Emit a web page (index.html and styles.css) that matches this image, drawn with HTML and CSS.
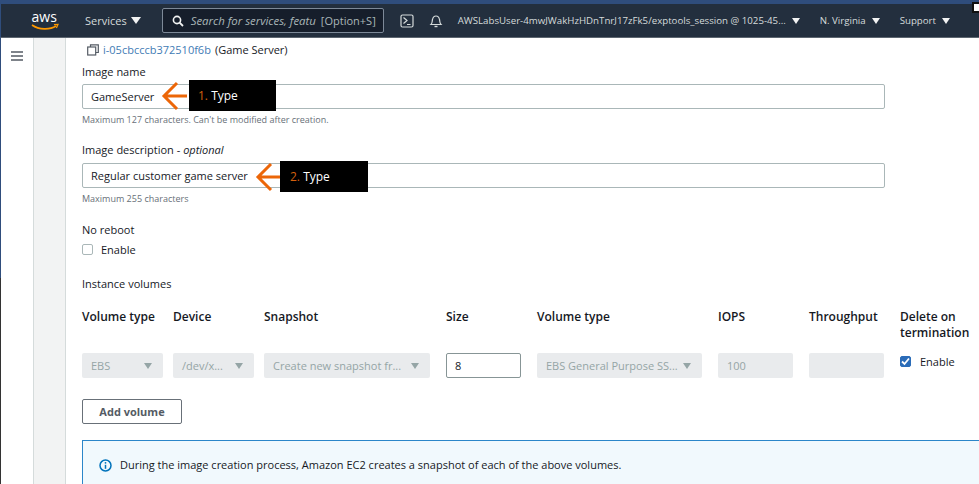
FILE: index.html
```html
<!DOCTYPE html>
<html>
	<head>
		<meta charset="UTF-8">
		<title>Create image</title>
		<link rel="stylesheet" href="styles.css">
	</head>
	<body>
		<div id="top-strip"></div>
		<div id="nav">
			<svg class="aws-logo" width="30" height="28" viewBox="0 -4 30 28">
				<text x="0.500" y="11" class="aws-text">aws</text>
				<path d="M1 14 C8 19 19 19 25 15" fill="none" stroke="#f90" stroke-width="1.600"/>
				<path d="M23 13.600 L27 13.400 L25.400 17" fill="none" stroke="#f90" stroke-width="1.200"/>
			</svg>
			<span class="nav-item services">Services <i class="caret"></i></span>
			<div class="search">
				<svg width="12" height="12" viewBox="0 0 12 12"><circle cx="5" cy="5" r="3.600" fill="none" stroke="#f2f3f3" stroke-width="1.600"/><path d="M7.600 7.600 L11 11" stroke="#f2f3f3" stroke-width="1.800"/></svg>
				<em>Search for services, featu</em>
				<span>[Option+S]</span>
			</div>
			<svg class="nav-icon shell" width="14" height="14" viewBox="0 0 14 14"><rect x="1" y="1" width="12" height="12" rx="1.500" fill="none" stroke="#d5dbdb" stroke-width="1.200"/><path d="M3.500 3.500 L7 6.500 L3.500 9.500 M7 10.500 H10.500" fill="none" stroke="#d5dbdb" stroke-width="1.200"/></svg>
			<svg class="nav-icon bell" width="14" height="14" viewBox="0 0 14 14"><path d="M2 10.500 C3.500 9 3 7.500 3.500 5.500 C4 3 5.500 2 7 2 C8.500 2 10 3 10.500 5.500 C11 7.500 10.500 9 12 10.500 Z" fill="none" stroke="#d5dbdb" stroke-width="1.200"/><path d="M5.500 12.500 H8.500" stroke="#d5dbdb" stroke-width="1.400"/></svg>
			<span class="nav-item account">AWSLabsUser-4mwJWakHzHDnTnrJ17zFk5/exptools_session @ 1025-45... <i class="caret"></i></span>
			<span class="nav-item region">N. Virginia <i class="caret"></i></span>
			<span class="nav-item support">Support <i class="caret"></i></span>
			<div class="corner-mark"></div>
		</div>
		<div id="page">
			<div id="sidebar">
				<svg width="12" height="10" viewBox="0 0 12 10"><path d="M0 1 H12 M0 5 H12 M0 9 H12" stroke="#545b64" stroke-width="1.300"/></svg>
			</div>
			<div id="gutter"></div>
			<div id="content">
				<div class="instance">
					<svg width="12" height="12" viewBox="0 0 12 12"><rect x="0.700" y="3" width="8" height="8" fill="none" stroke="#545b64" stroke-width="1.200"/><path d="M3.500 3 V0.800 H11.300 V8.500 H8.700" fill="none" stroke="#545b64" stroke-width="1.200"/></svg>
					<a href="#">i-05cbcccb372510f6b</a> (Game Server)
				</div>

				<label class="field-label">Image name</label>
				<div class="input-row">
					<div class="text-input">GameServer</div>
					<div class="callout callout-one">
						<svg width="28" height="30" viewBox="0 0 28 30"><path d="M26 15 H4 M16 2 L3 15 L16 28" fill="none" stroke="#ec6608" stroke-width="3"/></svg>
						<div class="callout-box"><b>1.</b> Type</div>
					</div>
				</div>
				<p class="hint">Maximum 127 characters. Can't be modified after creation.</p>

				<label class="field-label second">Image description - <em>optional</em></label>
				<div class="input-row second-row">
					<div class="text-input">Regular customer game server</div>
					<div class="callout callout-two">
						<svg width="28" height="30" viewBox="0 0 28 30"><path d="M26 15 H4 M16 2 L3 15 L16 28" fill="none" stroke="#ec6608" stroke-width="3"/></svg>
						<div class="callout-box"><b>2.</b> Type</div>
					</div>
				</div>
				<p class="hint">Maximum 255 characters</p>

				<label class="field-label reboot">No reboot</label>
				<div class="check-row"><span class="checkbox"></span>Enable</div>

				<label class="field-label volumes">Instance volumes</label>
				<div class="volume-grid">
					<div class="head">Volume type</div>
					<div class="head">Device</div>
					<div class="head">Snapshot</div>
					<div class="head">Size</div>
					<div class="head">Volume type</div>
					<div class="head">IOPS</div>
					<div class="head">Throughput</div>
					<div class="head">Delete on termination</div>

					<div class="select tight">EBS<i class="caret"></i></div>
					<div class="select tight">/dev/x...<i class="caret"></i></div>
					<div class="select">Create new snapshot fr...<i class="caret"></i></div>
					<div class="size-input">8</div>
					<div class="select">EBS General Purpose SS...<i class="caret"></i></div>
					<div class="select">100</div>
					<div class="select"></div>
					<div class="check-cell"><span class="checkbox checked"><svg width="9" height="9" viewBox="0 0 9 9"><path d="M1 4.500 L3.500 7 L8 1.500" fill="none" stroke="#fff" stroke-width="1.800"/></svg></span>Enable</div>
				</div>

				<button class="add-btn">Add volume</button>

				<div class="info">
					<svg width="13" height="13" viewBox="0 0 13 13"><circle cx="6.500" cy="6.500" r="5.500" fill="none" stroke="#0073bb" stroke-width="1.500"/><path d="M6.500 5.800 V9.800" stroke="#0073bb" stroke-width="1.500"/><circle cx="6.500" cy="3.800" r="0.900" fill="#0073bb"/></svg>
					During the image creation process, Amazon EC2 creates a snapshot of each of the above volumes.
				</div>
			</div>
		</div>
	</body>
</html>
```

FILE: styles.css
```css
* {
	margin: 0;
	padding: 0;
	box-sizing: border-box;
}
html, body {
	width: 979px;
	height: 484px;
	overflow: hidden;
}
body {
	background: #fff;
	font-family: "Open Sans", "Noto Sans", sans-serif;
	font-size: 11px;
	color: #16191f;
	display: flex;
	flex-direction: column;
}
.caret {
	display: inline-block;
	width: 0;
	height: 0;
	border-left: 4px solid transparent;
	border-right: 4px solid transparent;
	border-top: 6px solid #f2f3f3;
}

#top-strip {
	height: 4px;
	background: #2f4d7c;
}
#nav {
	height: 34px;
	background: #232f3e;
	border-bottom: 1px solid #5d6670;
	border-left: 1px solid #2f4d7c;
	display: flex;
	align-items: center;
	color: #d5dbdb;
	position: relative;
}
.aws-logo {
	margin-left: 30px;
}
.aws-text {
	font-family: "Open Sans", sans-serif;
	font-size: 14px;
	fill: #fff;
}
.nav-item {
	white-space: nowrap;
	display: flex;
	align-items: center;
	font-size: 9.700px;
}
.nav-item .caret {
	margin-left: 6px;
}
.services {
	font-size: 11px;
	margin-left: 24px;
}
.services .caret {
	border-left-width: 5px;
	border-right-width: 5px;
	border-top-width: 7px;
	margin-left: 4px;
}
.search {
	width: 222px;
	height: 25px;
	margin-left: 21px;
	background: #161e2b;
	border: 1px solid #7d8998;
	border-radius: 2px;
	display: flex;
	align-items: center;
	padding-left: 9px;
	white-space: nowrap;
	font-size: 11px;
	color: #aab7b8;
}
.search em {
	font-size: 11.400px;
	margin-left: 7px;
	margin-right: 5px;
}
.shell {
	margin-left: 16px;
}
.bell {
	margin-left: 15px;
}
.account {
	margin-left: 15px;
	width: 350px;
}
.region {
	margin-left: 12px;
}
.support {
	margin-left: 20px;
}
.corner-mark {
	position: absolute;
	right: 0;
	top: -2px;
	width: 7px;
	height: 11px;
	background: #fff;
	border: 2px solid #111;
	border-right: none;
}

#page {
	flex: 1;
	display: flex;
	min-height: 0;
}
/* the 1px line down the left edge changes colour part way */
#sidebar {
	width: 34px;
	background: linear-gradient(#2f4d7c 240px, #333 240px) 0 0 / 1px 100% no-repeat #fff;
	border-right: 1px solid #d5dbdb;
	padding: 11px 0 0 11px;
}
#gutter {
	width: 32px;
	background: #f2f3f3;
	border-right: 1px solid #d5dbdb;
}
#content {
	flex: 1;
	padding: 3px 0 0 16px;
	font-size: 11px;
	min-width: 0;
}
.instance {
	padding-left: 5px;
	height: 17px;
	display: flex;
	align-items: center;
	gap: 4px;
}
.instance a {
	color: #3f7cb5;
	text-decoration: none;
}
.field-label {
	display: block;
	margin-top: 6px;
	line-height: 15px;
}
.field-label.second {
	margin-top: 16px;
}
.field-label.reboot {
	margin-top: 17px;
}
.field-label.volumes {
	margin-top: 19px;
}
.input-row {
	position: relative;
	margin-top: 5px;
	width: 803px;
}
.second-row {
	margin-top: 6px;
}
.text-input {
	height: 25px;
	border: 1px solid #aab7b8;
	border-radius: 2px;
	line-height: 23px;
	padding-left: 8px;
}
.callout {
	position: absolute;
	display: flex;
	align-items: center;
}
.callout-one {
	top: -4px;
	left: 79px;
}
.callout-two {
	top: -2px;
	left: 173px;
}
.callout-two svg {
	margin-right: -3px;
}
.callout-two .callout-box {
	width: 88px;
	padding-left: 10px;
}
.callout-box {
	position: relative;
	width: 87px;
	height: 31px;
	background: #000;
	color: #fff;
	font-size: 12px;
	line-height: 31px;
	padding-left: 9px;
}
.callout-box b {
	color: #d4600e;
	font-weight: normal;
}
.hint {
	margin-top: 4px;
	font-size: 9px;
	color: #687078;
	line-height: 13px;
}
.check-row {
	display: flex;
	align-items: center;
	margin-top: 5px;
	height: 15px;
	gap: 8px;
}
.checkbox {
	width: 11px;
	height: 11px;
	border: 1px solid #aab7b8;
	border-radius: 2px;
	display: flex;
	align-items: center;
	justify-content: center;
}
.checkbox.checked {
	background: #2b6cb8;
	border-color: #2b6cb8;
}
.volume-grid {
	display: grid;
	grid-template-columns: 81px 81px 172px 81px 171px 81px 81px 79px;
	column-gap: 10px;
	grid-template-rows: 44px 25px;
	margin-top: 18px;
	width: 900px;
}
.head {
	font-size: 12px;
	font-weight: 600;
	line-height: 16px;
	align-self: start;
}
.select {
	height: 25px;
	margin-right: 6px;
	background: #e9ebed;
	border-radius: 2px;
	color: #95a5a6;
	display: flex;
	align-items: center;
	justify-content: space-between;
	padding: 0 11px 0 9px;
	white-space: nowrap;
	min-width: 0;
}
.select.tight {
	margin-right: 0;
}
.select .caret {
	border-top-color: #95a5a6;
}
.size-input {
	height: 25px;
	margin-right: 6px;
	border: 1px solid #879596;
	border-radius: 2px;
	line-height: 24px;
	padding-left: 8px;
}
.check-cell {
	display: flex;
	align-items: center;
	height: 16px;
	gap: 9px;
}
.add-btn {
	display: block;
	margin-top: 21px;
	width: 100px;
	height: 25px;
	background: #fff;
	border: 1px solid #687078;
	border-radius: 2px;
	color: #545b64;
	font-family: inherit;
	font-size: 11px;
	font-weight: 700;
}
.info {
	margin-top: 16px;
	height: 60px;
	background: #f1f9fd;
	border: 1px solid #2b86c9;
	border-right: none;
	padding: 16px 0 0 16px;
	display: flex;
	align-items: flex-start;
	gap: 8px;
	line-height: 16px;
}
.info svg {
	margin-top: 2px;
}
```
